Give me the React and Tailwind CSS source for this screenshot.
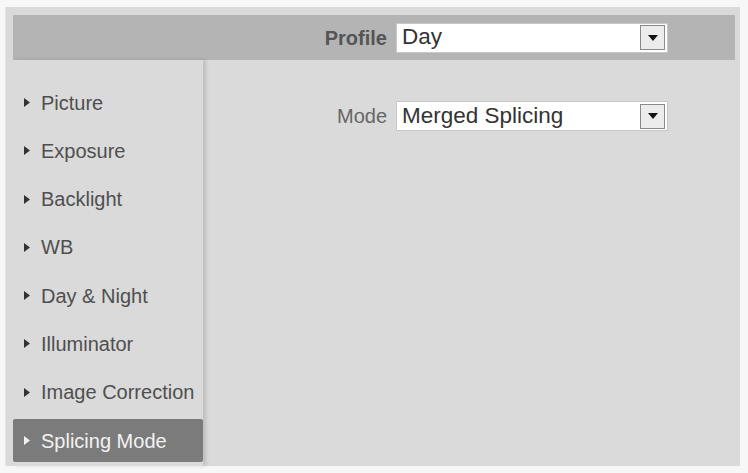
const menu = [
  "Picture",
  "Exposure",
  "Backlight",
  "WB",
  "Day & Night",
  "Illuminator",
  "Image Correction",
  "Splicing Mode",
];

function Select({ value }) {
  return (
    <div className="flex h-[30px] w-[272px] items-center border border-[#c8c8c8] bg-white">
      <span className="flex-1 pl-[5px] text-[22.5px] leading-none text-[#333]">{value}</span>
      <div className="mr-[2px] flex h-[25px] w-[25px] items-center justify-center border border-[#8a8a8a] bg-[#ececec]">
        <svg width="10" height="6" viewBox="0 0 10 6">
          <path d="M0 0H10L5 6Z" fill="#111" />
        </svg>
      </div>
    </div>
  );
}

export default function App() {
  return (
    <div
      className="flex h-[473px] w-[748px] flex-col bg-[#f7f7f7] pl-[5px] pr-[8px] pt-[7px] pb-[7px]"
      style={{ fontFamily: '"Liberation Sans", Arial, sans-serif' }}
    >
      <div className="flex flex-1 flex-col border-l border-[#e4e4e4] bg-[#dadada]">
        <div className="ml-[7px] mr-[5px] mt-[8px] flex h-[45px] items-center bg-[#b4b4b4]">
          <div className="w-[383px] pr-[9px] text-right text-[20px] font-bold text-[#555]">Profile</div>
          <Select value="Day" />
        </div>

        <div className="flex flex-1">
          <div className="ml-[7px] flex w-[190px] flex-col gap-[5.3px] pt-[21px] shadow-[3px_0_4px_rgba(0,0,0,0.13)]">
            {menu.map((item) => {
              const active = item === "Splicing Mode";
              return (
                <div
                  key={item}
                  className={
                    active
                      ? "flex h-[43px] items-center rounded-[2px] bg-[#7b7b7b] pl-[11px] text-[#f2f2f2]"
                      : "flex h-[43px] items-center pl-[11px] text-[#4f4f4f]"
                  }
                >
                  <svg width="6" height="9" viewBox="0 0 6 9" className="mr-[11px]">
                    <path d="M0 0L6 4.5L0 9Z" fill={active ? "#f2f2f2" : "#333"} />
                  </svg>
                  <span className="text-[20px] leading-none whitespace-nowrap">{item}</span>
                </div>
              );
            })}
          </div>

          <div className="flex-1 pt-[41px]">
            <div className="flex items-center">
              <div className="w-[193px] pr-[9px] text-right text-[20px] text-[#666]">Mode</div>
              <Select value="Merged Splicing" />
            </div>
          </div>
        </div>
      </div>
    </div>
  );
}
